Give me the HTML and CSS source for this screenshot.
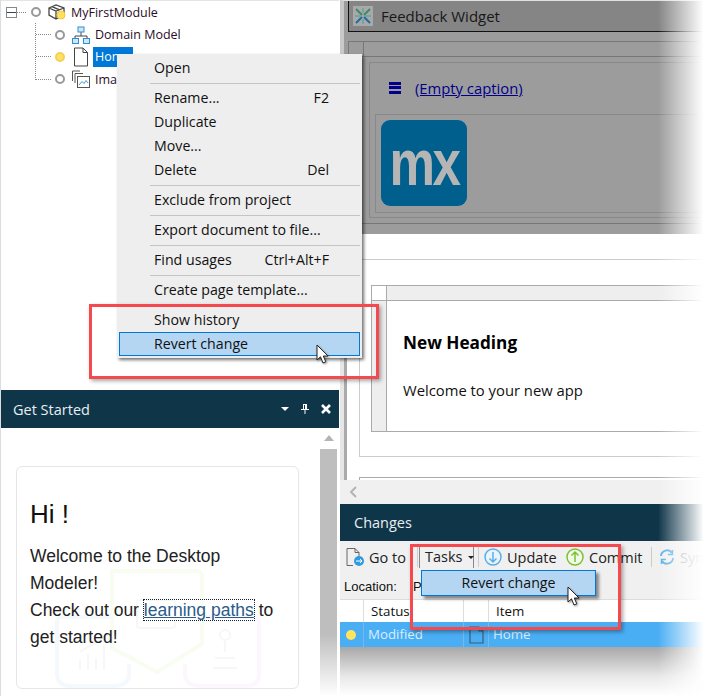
FILE: index.html
```html
<!doctype html>
<html lang="en">
    <head>
        <meta charset="utf-8">
        <title>Revert change</title>
        <link rel="stylesheet" href="styles.css">
    </head>
    <body>
        <div class="page">
            <div class="left">
                <div class="tree">
                    <div class="tree-row">
                        <span class="toggle"></span>
                        <span class="dots"></span>
                        <span class="dot"></span>
                        <svg class="node-icon" width="20" height="20" viewBox="0 0 20 20">
                            <path d="M2 6 L9 3 L17 6 L17 13 L9 17 L2 13 Z M2 6 L9 9 L17 6 M9 9 L9 17 M5 4.6 L12 7.6" fill="#fff" stroke="#444" stroke-width="1.3"/>
                            <circle cx="14" cy="13" r="4" fill="#ffdf5e" stroke="#f3c93a"/>
                        </svg>
                        <span class="node-label">MyFirstModule</span>
                    </div>
                    <div class="tree-children">
                        <div class="tree-row">
                            <span class="dots child-dots"></span>
                            <span class="dot"></span>
                            <svg class="node-icon" width="20" height="20" viewBox="0 0 20 20">
                                <path d="M10 7 V11 M4 14 V11 H16 V14" fill="none" stroke="#444"/>
                                <rect x="7" y="2" width="6" height="5" fill="#cfe6f7" stroke="#2f8fd0"/>
                                <rect x="1.5" y="13.500" width="6" height="5" fill="#cfe6f7" stroke="#2f8fd0"/>
                                <rect x="12.500" y="13.500" width="6" height="5" fill="#cfe6f7" stroke="#2f8fd0"/>
                            </svg>
                            <span class="node-label">Domain Model</span>
                        </div>
                        <div class="tree-row">
                            <span class="dots child-dots"></span>
                            <span class="dot dot-changed"></span>
                            <svg class="node-icon" width="20" height="20" viewBox="0 0 20 20">
                                <path d="M3.500 1 H12 L16.500 5.500 V19 H3.500 Z M12 1 V5.500 H16.500" fill="#fff" stroke="#444"/>
                            </svg>
                            <span class="node-label node-selected">Home</span>
                        </div>
                        <div class="tree-row">
                            <span class="dots child-dots"></span>
                            <span class="dot"></span>
                            <svg class="node-icon" width="20" height="20" viewBox="0 0 20 20">
                                <path d="M1.500 12 V2 H9 M4 14 V4.500 H12" fill="none" stroke="#555"/>
                                <rect x="6.500" y="7.500" width="12" height="11" fill="#fff" stroke="#555"/>
                                <path d="M8 16 L11 12.500 L13 14.500 L15 11.500 L17 14" fill="none" stroke="#3d9bd8"/>
                            </svg>
                            <span class="node-label">Images</span>
                        </div>
                    </div>
                </div>
                <div class="panel">
                    <div class="panel-head">
                        <span>Get Started</span>
                        <span class="panel-tools">
                            <svg width="10" height="6" viewBox="0 0 10 6"><path d="M1 1 H9 L5 5 Z" fill="#fff"/></svg>
                            <svg width="10" height="12" viewBox="0 0 10 12"><path d="M3 1 H7 V6 H9 V7 H5.500 V11 H4.500 V7 H1 V6 H3 Z M4 2 V6 H5 V2 Z" fill="#fff"/></svg>
                            <svg width="12" height="12" viewBox="0 0 12 12"><path d="M2 2 L10 10 M10 2 L2 10" stroke="#fff" stroke-width="2.600"/></svg>
                        </span>
                    </div>
                    <div class="panel-body">
                        <div class="welcome">
                            <svg class="watermark" width="210" height="120" viewBox="0 0 210 120">
                                <path d="M59 3 H143 Q149 3 149 9 V76 L104 104 L59 80 Z" fill="none" stroke="#f8fcf1" stroke-width="4"/>
                                <path d="M58 49 H8 Q4 49 4 55 V106 Q4 118 18 118 H60 Q76 118 76 106 V96" fill="none" stroke="#f4f9fe" stroke-width="4"/>
                                <path d="M150 49 H200 Q206 49 206 55 V106 Q206 118 194 118 H148 Q132 118 132 106 V96" fill="none" stroke="#fbf7fd" stroke-width="4"/>
                                <rect x="84" y="32" width="38" height="28" rx="3" fill="none" stroke="#f7f7f7" stroke-width="2"/>
                                <path d="M27 102 V92 M35 102 V86 M43 102 V90 M51 102 V78 M27 84 L40 76 L50 70" fill="none" stroke="#f7f7f7" stroke-width="2"/>
                                <path d="M160 100 H184 M162 90 H182 M172 72 V84" fill="none" stroke="#f7f7f7" stroke-width="2"/>
                                <circle cx="172" cy="67" r="5" fill="none" stroke="#f7f7f7" stroke-width="2"/>
                            </svg>
                            <div class="hi">Hi !</div>
                            <div class="welcome-text">
                                Welcome to the Desktop Modeler!<br>
                                Check out our <a class="learn" href="#">learning paths</a> to get started!
                            </div>
                        </div>
                        <div class="scrollbar">
                            <div class="scroll-arrow"></div>
                            <div class="scroll-thumb"></div>
                        </div>
                    </div>
                </div>
            </div>

            <div class="right">
                <div class="editor">
                    <div class="dimmed">
                        <div class="tab">
                            <svg width="20" height="20" viewBox="0 0 20 20">
                                <rect width="20" height="20" fill="#a9a9a9"/>
                                <path d="M3 3 L9 9 M17 3 L11 9" stroke="#3f8a66" stroke-width="2"/>
                                <path d="M3 17 L9 11 M17 17 L11 11" stroke="#1f6f9a" stroke-width="2"/>
                                <path d="M2 10 H8 M12 10 H18 M10 2 V7 M10 13 V18" stroke="#6aa0a8" stroke-width="1.500"/>
                            </svg>
                            <span>Feedback Widget</span>
                        </div>
                        <div class="layout-grid">
                            <div class="grid-top"><span class="grid-corner"></span></div>
                            <div class="widget-box">
                                <div class="nav-row">
                                    <span class="burger"></span>
                                    <a class="caption" href="#">(Empty caption)</a>
                                </div>
                                <div class="image-box">
                                    <div class="logo"><span class="logo-text">mx</span></div>
                                </div>
                            </div>
                        </div>
                    </div>
                    <div class="canvas">
                        <div class="outer-box">
                            <div class="card">
                                <div class="card-top"><span class="card-corner"></span></div>
                                <div class="card-main">
                                    <div class="card-side"></div>
                                    <div class="card-body">
                                        <div class="card-title">New Heading</div>
                                        <div class="card-text">Welcome to your new app</div>
                                    </div>
                                </div>
                            </div>
                        </div>
                        <div class="next-box"></div>
                    </div>
                    <div class="hscroll">
                        <svg width="8" height="12" viewBox="0 0 8 12"><path d="M7 1 L2 6 L7 11" fill="none" stroke="#b4b4b4" stroke-width="2"/></svg>
                    </div>
                </div>
                <div class="changes">
                    <div class="changes-head">Changes</div>
                    <div class="toolbar">
                        <svg class="tool-icon" width="20" height="20" viewBox="0 0 20 20">
                            <path d="M8 18.500 H2 V1.500 H10 L14 5.500 V9 M10 1.500 V5.500 H14" fill="none" stroke="#666"/>
                            <circle cx="14" cy="14" r="5" fill="#2f9be0"/>
                            <path d="M11 14 H17 M15 12 L17 14 L15 16" fill="none" stroke="#fff"/>
                        </svg>
                        <span class="tool-goto">Go to</span>
                        <span class="tool-sep sep-a"></span>
                        <span class="tasks">Tasks <i class="caret"></i></span>
                        <span class="tool-sep sep-b"></span>
                        <svg class="tool-icon" width="18" height="18" viewBox="0 0 18 18">
                            <circle cx="9" cy="9" r="8" fill="#eaf4fc" stroke="#5aaee6" stroke-width="1.500"/>
                            <path d="M9 4 V14 M5.500 10.500 L9 14 L12.500 10.500" fill="none" stroke="#5aaee6" stroke-width="1.500"/>
                        </svg>
                        <span class="tool-update">Update</span>
                        <svg class="tool-icon" width="18" height="18" viewBox="0 0 18 18">
                            <circle cx="9" cy="9" r="8" fill="#f1f9e8" stroke="#7cc230" stroke-width="1.500"/>
                            <path d="M9 14 V4 M5.500 7.500 L9 4 L12.500 7.500" fill="none" stroke="#7cc230" stroke-width="1.500"/>
                        </svg>
                        <span class="tool-commit">Commit</span>
                        <span class="tool-sep sep-c"></span>
                        <svg class="tool-icon" width="16" height="16" viewBox="0 0 16 16">
                            <path d="M2 7 A6 6 0 0 1 13 4 M14 9 A6 6 0 0 1 3 12" fill="none" stroke="#5aaee6" stroke-width="1.800"/>
                            <path d="M13.500 1 V5.500 H9 M2.500 15 V10.500 H7" fill="none" stroke="#5aaee6" stroke-width="1.500"/>
                        </svg>
                        <span class="tool-sync">Syn</span>
                    </div>
                    <div class="location"><span class="location-label">Location:</span><span>P</span></div>
                    <div class="list-head">
                        <span class="col-a"></span>
                        <span class="col-b">Status</span>
                        <span class="col-c"></span>
                        <span class="col-d">Item</span>
                    </div>
                    <div class="list-row">
                        <span class="col-a"><i class="row-dot"></i></span>
                        <span class="col-b">Modified</span>
                        <span class="col-c">
                            <svg width="15" height="18" viewBox="0 0 15 18"><path d="M1 1 H10 L14 5 V17 H1 Z M10 1 V5 H14" fill="none" stroke="#3d5b73" stroke-width="1.200"/></svg>
                        </span>
                        <span class="col-d">Home</span>
                    </div>
                    <div class="changes-shadow"></div>
                </div>
            </div>

            <div class="fade-right"></div>

            <ul class="menu">
                <li>Open</li>
                <li class="sep"></li>
                <li>Rename...<b>F2</b></li>
                <li>Duplicate</li>
                <li>Move...</li>
                <li>Delete<b>Del</b></li>
                <li class="sep"></li>
                <li>Exclude from project</li>
                <li class="sep"></li>
                <li>Export document to file...</li>
                <li class="sep"></li>
                <li>Find usages<b>Ctrl+Alt+F</b></li>
                <li class="sep"></li>
                <li>Create page template...</li>
                <li class="sep sep-faint"></li>
                <li>Show history</li>
                <li class="active">Revert change</li>
            </ul>

            <div class="tasks-menu">Revert change</div>

            <div class="red-box red-menu"></div>
            <div class="red-box red-tasks"></div>

            <svg class="cursor cursor-menu" width="15" height="21" viewBox="0 0 15 21"><path d="M1 1 V16 L4.500 12.800 L7 19 L9.800 17.800 L7.300 12 H12 Z" fill="#fff" stroke="#222"/></svg>
            <svg class="cursor cursor-tasks" width="15" height="21" viewBox="0 0 15 21"><path d="M1 1 V16 L4.500 12.800 L7 19 L9.800 17.800 L7.300 12 H12 Z" fill="#fff" stroke="#222"/></svg>
        </div>
    </body>
</html>
```

FILE: styles.css
```css
* {
    box-sizing: border-box;
}
body {
    margin: 0;
    background: #fff;
    font-family: "Open Sans", "Noto Sans", sans-serif;
    font-size: 14px;
    color: #111;
}
.page {
    position: relative;
    width: 706px;
    height: 696px;
    overflow: hidden;
    display: flex;
}

/* left column */
.left {
    width: 340px;
    height: 696px;
    border-left: 1px solid #ddd;
    padding-right: 1px;
    display: flex;
    flex-direction: column;
}
.tree {
    height: 390px;
    border-top: 1px solid #e4e4e4;
    padding: 0 0 0 5px;
}
.tree-row {
    height: 22.400px;
    display: flex;
    align-items: center;
    font-size: 12.500px;
    color: #2a0d28;
}
.tree-children {
    margin-left: 29px;
    border-left: 1px dotted #888;
    height: 57px;
    margin-bottom: -11px;
}
.toggle {
    width: 11px;
    height: 11px;
    border: 1px solid #888;
    background: linear-gradient(#fff 0 4px, #345 4px 5px, #fff 5px);
}
.dots {
    width: 9px;
    border-bottom: 1px dotted #888;
    margin-right: 5px;
}
.child-dots {
    width: 15px;
    margin-right: 4px;
}
.dot {
    width: 10px;
    height: 10px;
    border-radius: 50%;
    border: 2px solid #999;
    background: #fff;
    margin-right: 6px;
}
.dot-changed {
    background: #ffe16b;
    border-color: #f4d14e;
}
.node-icon {
    margin-right: 4px;
}
.node-selected {
    background: #0078d7;
    color: #fff;
    outline: 1px dotted #fff;
    width: 40px;
    height: 20px;
    margin-left: -2px;
    padding-left: 2px;
    overflow: hidden;
    line-height: 20px;
}
.panel {
    flex: 1;
    display: flex;
    flex-direction: column;
}
.panel-head {
    height: 38px;
    background: #0f3549;
    color: #e8eef2;
    font-size: 14.500px;
    padding: 0 7px 0 12px;
    display: flex;
    align-items: center;
    justify-content: space-between;
}
.panel-tools {
    display: flex;
    align-items: center;
    gap: 10px;
}
.panel-body {
    flex: 1;
    display: flex;
    padding: 38px 2px 0 15px;
    position: relative;
}
.welcome {
    position: relative;
    width: 283px;
    height: 223px;
    border: 1px solid #e6e6e6;
    border-radius: 6px;
    padding: 31px 13px 0;
    font-family: "Liberation Sans", Arial, sans-serif;
    color: #222;
}
.watermark {
    position: absolute;
    left: 36px;
    top: 101px;
}
.hi {
    position: relative;
    font-size: 26px;
    line-height: 32px;
    margin-bottom: 13px;
    color: #111;
}
.welcome-text {
    position: relative;
    font-size: 17.500px;
    line-height: 27px;
}
.learn {
    color: #2a5b8c;
    text-decoration: underline;
    outline: 1px dotted #123;
}
.scrollbar {
    position: absolute;
    top: 0;
    right: 2px;
    width: 17px;
    height: 268px;
}
.scroll-arrow {
    height: 21px;
    position: relative;
}
.scroll-arrow::after {
    content: "";
    position: absolute;
    left: 4px;
    top: 7px;
    border: 5px solid transparent;
    border-top: 0;
    border-bottom: 6px solid #b4b4b4;
}
.scroll-thumb {
    height: 247px;
    background: linear-gradient(#bebebe 0 75%, #fff 100%);
}

/* right column */
.right {
    width: 366px;
    height: 696px;
    display: flex;
    flex-direction: column;
}
.editor {
    height: 504px;
    display: flex;
    flex-direction: column;
}
.dimmed {
    height: 234px;
    background: #9c9c9c;
    border-left: 4px solid #c9c9c9;
    border-top: 1px solid #e0e0e0;
    padding-left: 4px;
}
.tab {
    height: 31px;
    background: #858585;
    border-left: 1px solid #111;
    border-bottom: 1px solid #111;
    display: flex;
    align-items: center;
    gap: 8px;
    padding-left: 4px;
    font-size: 15px;
    color: #181818;
}
.layout-grid {
    margin-top: 9px;
    border-bottom: 1px solid #777;
    height: 183px;
}
.grid-top {
    height: 16px;
    border: 1px solid #777;
    border-right: 0;
}
.grid-corner {
    display: block;
    width: 15px;
    height: 14px;
    border-right: 1px solid #777;
}
.widget-box {
    margin: 5px 0 0 21px;
    height: 156px;
    border: 1px solid #888;
    border-right: 0;
    padding: 0 0 0 5px;
}
.nav-row {
    height: 51px;
    display: flex;
    align-items: center;
    gap: 14px;
    padding: 0 0 2px 14px;
}
.burger {
    width: 12px;
    height: 12px;
    background: linear-gradient(#00008c 0 3px, transparent 3px 4.500px, #00008c 4.500px 7.500px, transparent 7.500px 9px, #00008c 9px);
}
.caption {
    color: #00008c;
    font-size: 14.800px;
}
.image-box {
    height: 99px;
    border: 1px solid #888;
    border-right: 0;
    padding: 5px;
}
.logo {
    width: 86px;
    height: 86px;
    border-radius: 9px;
    background: #005f8c;
    color: #b5b5b5;
    font-family: "Liberation Sans", Arial, sans-serif;
    font-weight: bold;
    font-size: 64px;
    line-height: 86px;
    letter-spacing: -3px;
    text-align: center;
    overflow: hidden;
}
.logo-text {
    display: block;
    margin-left: -7px;
    width: 100px;
    transform: scaleX(.8);
}
.canvas {
    height: 246px;
    border-left: 4px solid #e6e6e6;
    position: relative;
    padding-left: 15px;
    background: #fff;
}
.canvas::before {
    content: "";
    position: absolute;
    left: 0;
    top: 0;
    width: 3px;
    height: 100%;
    background: #aaa;
}
.outer-box {
    margin-top: 25px;
    height: 198px;
    border-top: 1px solid #ccc;
    border-left: 1px solid #ccc;
    border-bottom: 1px solid #ccc;
    padding: 25px 0 0 11px;
}
.card {
    height: 147px;
    border: 1px solid #aaa;
    border-right: 0;
}
.card-top {
    height: 15px;
    background: #eee;
    border-bottom: 1px solid #aaa;
}
.card-corner {
    display: block;
    width: 15px;
    height: 14px;
    background: #fff;
    border-right: 1px solid #aaa;
}
.card-main {
    display: flex;
    height: 130px;
}
.card-side {
    width: 15px;
    background: #eee;
    border-right: 1px solid #aaa;
}
.card-body {
    padding: 30px 0 0 16px;
}
.card-title {
    font-weight: bold;
    font-size: 17.200px;
    line-height: 24px;
    color: #000;
}
.card-text {
    margin-top: 23px;
    font-size: 14.800px;
    line-height: 24px;
}
.next-box {
    margin-top: 20px;
    height: 3px;
    border: 1px solid #aaa;
    border-bottom: 0;
}
.hscroll {
    height: 24px;
    background: #f0f0f0;
    padding-left: 9px;
    display: flex;
    align-items: center;
}
.changes {
    flex: 1;
    display: flex;
    flex-direction: column;
}
.changes-head {
    height: 37px;
    background: #0f3549;
    color: #e8eef2;
    font-size: 14.500px;
    display: flex;
    align-items: center;
    padding-left: 14px;
}
.toolbar {
    height: 32px;
    background: #f0f0f0;
    display: flex;
    align-items: center;
    padding-left: 5px;
    font-size: 14.500px;
    color: #222;
    white-space: nowrap;
}
.tool-icon {
    margin-right: 4px;
    flex: none;
}
.tool-goto {
    width: 37px;
    flex: none;
}
.tool-sep {
    width: 1px;
    height: 20px;
    background: #ccc;
    flex: none;
}
.sep-a {
    margin-left: 11px;
}
.tasks {
    width: 55px;
    height: 22px;
    margin-left: 1px;
    border-left: 1px solid #888;
    border-right: 1px solid #888;
    padding-left: 5px;
    line-height: 22px;
    display: flex;
    align-items: center;
    gap: 6px;
    flex: none;
}
.caret {
    border: 3px solid transparent;
    border-top: 3px solid #222;
    border-bottom: 0;
}
.sep-b {
    margin: 0 5px 0 4px;
}
.tool-update {
    width: 49px;
    margin: 0 10px 0 1px;
    flex: none;
}
.tool-commit {
    width: 52px;
    margin: 0 10px 0 1px;
    flex: none;
}
.sep-c {
    margin-right: 7px;
}
.tool-sync {
    margin-left: 1px;
    color: #aaa;
}
.location {
    height: 27px;
    background: #f0f0f0;
    border-bottom: 1px solid #ddd;
    display: flex;
    align-items: center;
    padding-left: 4px;
    font-family: "Liberation Sans", Arial, sans-serif;
    font-size: 13px;
}
.location-label {
    width: 69px;
}
.list-head, .list-row {
    display: flex;
    font-size: 13.300px;
    align-items: stretch;
}
.list-head {
    height: 22px;
    line-height: 22px;
    background: #fff;
}
.list-row {
    height: 25px;
    line-height: 25px;
    background: #4aaef5;
    color: #dbeefc;
}
.col-a, .col-b, .col-c {
    border-right: 1px solid #ddd;
}
.list-row span {
    border-color: #7ab8e6;
}
.col-a {
    width: 24px;
    display: flex;
    align-items: center;
    padding-left: 6px;
}
.col-b {
    width: 100px;
    padding-left: 7px;
}
.list-row .col-b {
    padding-left: 4px;
}
.col-c {
    width: 25px;
    display: flex;
    align-items: center;
    padding-left: 5px;
}
.col-d {
    padding-left: 7px;
}
.list-row .col-d {
    padding-left: 4px;
}
.row-dot {
    width: 10px;
    height: 10px;
    border-radius: 50%;
    background: #ffe45f;
}
.changes-shadow {
    flex: 1;
    background: linear-gradient(#a8a8a8, #e8e8e8 60%, #fff);
}
.fade-right {
    position: absolute;
    right: 0;
    top: 0;
    width: 48px;
    height: 696px;
    background: linear-gradient(to right, rgba(255,255,255,0), #fff 95%);
}

/* overlays */
.menu {
    position: absolute;
    left: 117px;
    top: 54px;
    width: 245px;
    height: 304px;
    margin: 0;
    padding: 2px 2px 0 2px;
    list-style: none;
    background: #eee;
    box-shadow: 2px 2px 3px rgba(0,0,0,.55);
    font-size: 14.200px;
}
.menu li {
    height: 24px;
    line-height: 23px;
    padding: 0 31px 0 35px;
    display: flex;
    justify-content: space-between;
}
.menu b {
    font-weight: normal;
}
.menu .sep {
    height: 1px;
    margin: 2.500px 0 2.500px 31px;
    padding: 0;
    background: #c4c4c4;
}
.menu .sep-faint {
    background: transparent;
}
.menu .active {
    background: #b4d6f3;
    outline: 1px solid #0078d7;
    outline-offset: -1px;
}
.tasks-menu {
    position: absolute;
    left: 421px;
    top: 570px;
    width: 175px;
    height: 26px;
    background: #b4d6f3;
    border: 1px solid #0078d7;
    box-shadow: 3px 3px 3px rgba(0,0,0,.45);
    text-align: center;
    font-size: 14.200px;
    line-height: 23px;
}
.red-box {
    position: absolute;
    border: 3px solid #f44a4f;
    box-shadow: 2px 2px 4px rgba(0,0,0,.35);
}
.red-menu {
    left: 89px;
    top: 304px;
    width: 290px;
    height: 75px;
}
.red-tasks {
    left: 410px;
    top: 544px;
    width: 211px;
    height: 86px;
}
.cursor {
    position: absolute;
    filter: drop-shadow(1px 1px 1px rgba(0,0,0,.4));
}
.cursor-menu {
    left: 316px;
    top: 344px;
}
.cursor-tasks {
    left: 567px;
    top: 586px;
}
```
